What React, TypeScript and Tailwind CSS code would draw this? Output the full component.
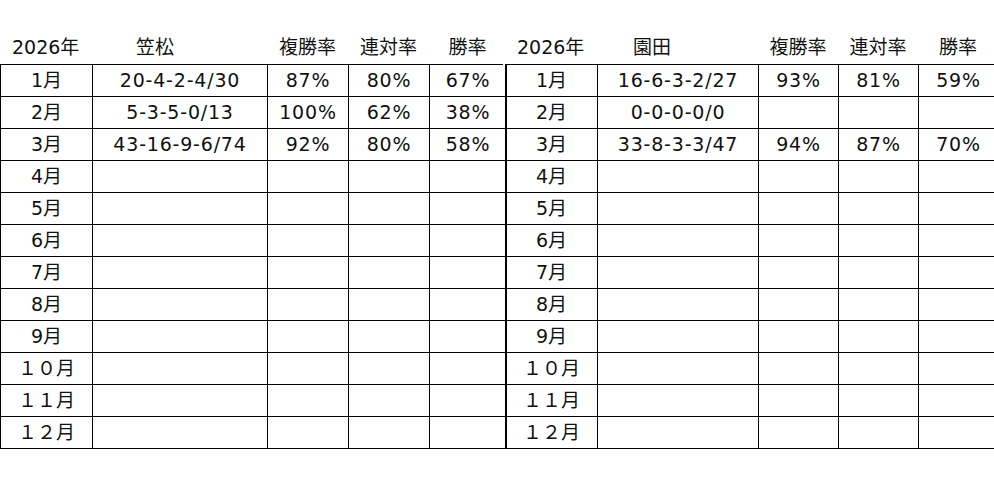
const months = ['1月', '2月', '3月', '4月', '5月', '6月', '7月', '8月', '9月', '１０月', '１１月', '１２月'];

type Row = [string, string, string, string];

const kasamatsu: Row[] = [
  ['20-4-2-4/30', '87%', '80%', '67%'],
  ['5-3-5-0/13', '100%', '62%', '38%'],
  ['43-16-9-6/74', '92%', '80%', '58%'],
];

const sonoda: Row[] = [
  ['16-6-3-2/27', '93%', '81%', '59%'],
  ['0-0-0-0/0', '', '', ''],
  ['33-8-3-3/47', '94%', '87%', '70%'],
];

function StatsTable({
  track,
  rows,
  cols,
  trackPad,
  className,
}: {
  track: string;
  rows: Row[];
  cols: string;
  trackPad: string;
  className: string;
}) {
  return (
    <div className={className}>
      <div className={`grid h-[34px] items-center ${cols}`}>
        <div className="pl-[12px]">2026年</div>
        <div className={trackPad}>{track}</div>
        <div className="text-center">複勝率</div>
        <div className="text-center">連対率</div>
        <div className="text-center">勝率</div>
      </div>
      <div className="border-t border-l border-black">
        {months.map((m, i) => {
          const r = rows[i] ?? ['', '', '', ''];
          return (
            <div key={m} className={`grid h-[32px] ${cols}`}>
              <div className="flex items-center justify-center border-r border-b border-black">{m}</div>
              {r.map((v, j) => (
                <div
                  key={j}
                  className="flex items-center justify-center border-r border-b border-black tracking-[0.8px]"
                >
                  {v}
                </div>
              ))}
            </div>
          );
        })}
      </div>
    </div>
  );
}

export default function App() {
  return (
    <div
      className="h-[481px] w-[994px] overflow-hidden bg-white pt-[30px] text-[19px] text-[#111]"
      style={{ fontFamily: '"DejaVu Sans", "Noto Sans CJK JP", sans-serif' }}
    >
      <div className="flex gap-[2px]">
        <StatsTable
          track="笠松"
          rows={kasamatsu}
          cols="grid-cols-[92px_175px_81px_81px_77px]"
          trackPad="pl-[44px]"
          className="w-[503px] shrink-0"
        />
        <StatsTable
          track="園田"
          rows={sonoda}
          cols="grid-cols-[92px_161px_80px_80px_80px]"
          trackPad="pl-[36px]"
          className="w-[491px] shrink-0"
        />
      </div>
    </div>
  );
}
